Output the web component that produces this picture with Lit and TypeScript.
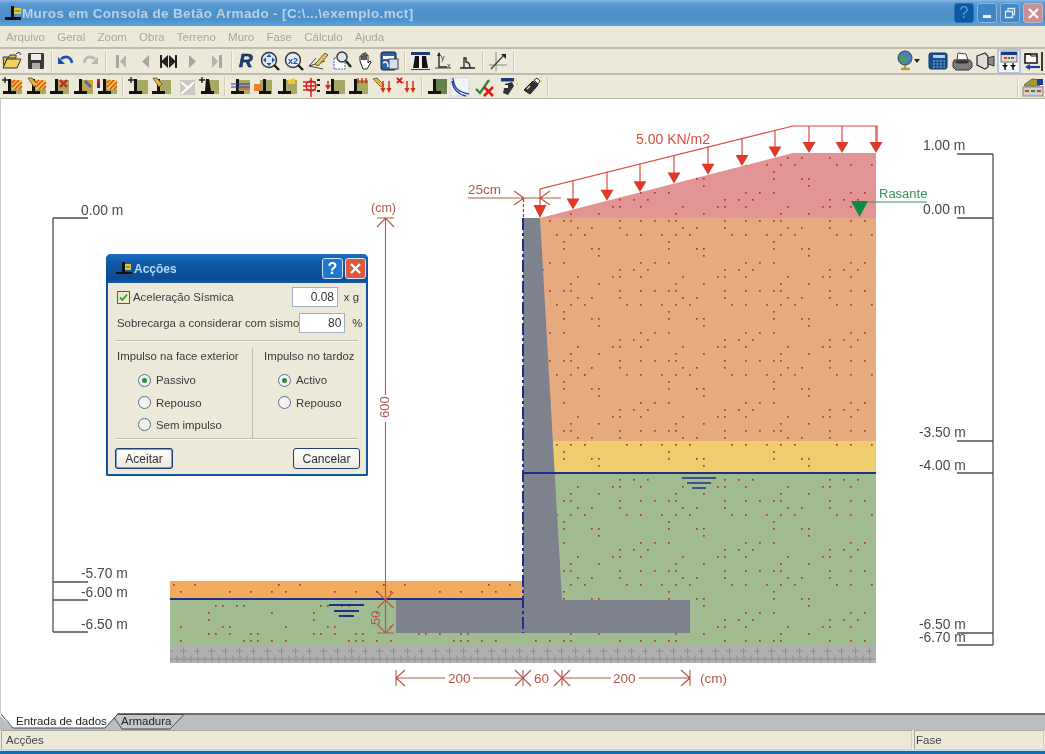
import { LitElement, html, css, svg } from "lit";
import { customElement } from "lit/decorators.js";

const FONT = '"Liberation Sans", Arial, sans-serif';

function wall(extra: any = null, hideWall = false) {
  return svg`
    ${hideWall ? svg`<rect x="6" y="4" width="15" height="15" fill="#c8c8c0"/><path d="M7 6l7 6-7 6M20 6l-6 6" stroke="#fff" stroke-width="2" fill="none"/>` : svg`
    <rect x="9" y="4" width="12" height="14" fill="#a9a765"/>
    <path d="M7 3h3v12h5v3H2v-3h5z" fill="#111"/>`}
    ${extra}`;
}
const plus = svg`<path d="M1 4h6M4 1v6" stroke="#222" stroke-width="1.4"/>`;
const hatch = svg`<rect x="11" y="4" width="10" height="9" fill="#f2c93a"/><path d="M11 7l3-3M11 11l7-7M14 13l7-7M18 13l3-3" stroke="#d8402c" stroke-width="1.4"/>`;
const pencil = svg`<path d="M3 2l4 0 5 6-3 3z" fill="#e6b93c" stroke="#533" stroke-width=".7"/>`;
const downs = (x: number) => svg`<path d="M${x} 5v9M${x + 6} 5v9" stroke="#d2301f" stroke-width="1.5"/><path d="M${x - 2.5} 12h5l-2.5 5zM${x + 3.5} 12h5l-2.5 5z" fill="#d2301f"/>`;

const ICONS: Record<string, any> = {
  open: svg`<path d="M2 7h6l1-2h6v3H6L3 17z" fill="#e8c44c" stroke="#333"/><path d="M6 9h14l-4 9H2z" fill="#f0d25c" stroke="#333"/><path d="M15 4l3-2 2 3" stroke="#333" fill="none"/>`,
  save: svg`<rect x="3" y="3" width="16" height="16" rx="1" fill="#3a3a3a"/><rect x="6" y="4" width="10" height="6" fill="#eee"/><rect x="7" y="13" width="8" height="6" fill="#aaa"/>`,
  undo: svg`<path d="M6 9c5-4 10-2 11 4" stroke="#1c4fb0" stroke-width="2.6" fill="none"/><path d="M3 7v7h7z" fill="#1c4fb0"/>`,
  redo: svg`<path d="M16 9c-5-4-10-2-11 4" stroke="#b8b8b0" stroke-width="2.6" fill="none"/><path d="M19 7v7h-7z" fill="#b8b8b0"/>`,
  first: svg`<rect x="6" y="5" width="3" height="13" fill="#a8a8a0"/><path d="M16 5v13l-6-6.5z" fill="#b4b4ac"/>`,
  prev: svg`<path d="M15 5v13l-7-6.5z" fill="#a8a8a0"/>`,
  both: svg`<path d="M11 5v13l-7-6.5zM12 5v13l7-6.5z" fill="#222"/><rect x="3" y="5" width="2" height="13" fill="#222"/><rect x="18" y="5" width="2" height="13" fill="#222"/>`,
  next: svg`<path d="M8 5v13l7-6.5z" fill="#a8a8a0"/>`,
  last: svg`<rect x="14" y="5" width="3" height="13" fill="#a8a8a0"/><path d="M7 5v13l6-6.5z" fill="#b4b4ac"/>`,
  zr: svg`<text x="3" y="17" font-family=${FONT} font-weight="700" font-style="italic" font-size="19" fill="#1c3f8f" stroke="#111" stroke-width=".5">R</text>`,
  zall: svg`<circle cx="10" cy="10" r="7.5" fill="#dfe8f2" stroke="#333" stroke-width="1.4"/><path d="M10 4l2.5 3h-5zM10 16l2.5-3h-5zM4 10l3-2.5v5zM16 10l-3-2.5v5z" fill="#1c4fb0"/><path d="M15 15l5 5" stroke="#222" stroke-width="2.4"/>`,
  z2: svg`<circle cx="10" cy="10" r="7.5" fill="#e6eef6" stroke="#333" stroke-width="1.4"/><text x="5" y="13.5" font-family=${FONT} font-size="9" font-weight="700" fill="#1c4fb0">x2</text><path d="M15 15l5 5" stroke="#222" stroke-width="2.4"/>`,
  pen: svg`<path d="M2 16l16-5M2 16l14 3M2 16l7-8" stroke="#444"/><path d="M8 14L18 3l3 2-10 11z" fill="#e8c44c" stroke="#433" stroke-width=".8"/>`,
  zdoc: svg`<rect x="3" y="8" width="11" height="11" fill="#fff" stroke="#3a6ac8" stroke-dasharray="2 1"/><circle cx="11" cy="7" r="5" fill="#dfe8f2" stroke="#333" stroke-width="1.4"/><path d="M15 11l5 6" stroke="#222" stroke-width="2.4"/>`,
  hand: svg`<path d="M6 11V6h2v4V4h2v6V3h2v7V5h2v8l2-2 1 1-4 7H9z" fill="#fff" stroke="#222" stroke-width="1"/>`,
  win: svg`<rect x="3" y="2" width="15" height="18" rx="2" fill="#2b63a8" stroke="#123"/><rect x="5" y="6" width="11" height="3" fill="#fff"/><rect x="11" y="9" width="9" height="10" fill="#dde" stroke="#345"/><path d="M5 13c3-2 5-1 5 4" stroke="#fff" stroke-width="1.5" fill="none"/>`,
  bin: svg`<rect x="2" y="2" width="19" height="18" fill="#20397c"/><rect x="2" y="5" width="19" height="14" fill="#eee"/><path d="M6 6h4v12H4zM13 6h4l2 12h-6z" fill="#111"/>`,
  axyx: svg`<path d="M6 3v14h8" stroke="#222" stroke-width="1.3" fill="none"/><path d="M6 2l-2 4h4z" fill="#222"/><text x="8" y="10" font-size="7" font-family=${FONT} fill="#333">y</text><text x="14" y="18" font-size="7" font-family=${FONT} fill="#333">x</text><path d="M2 18h16" stroke="#444"/>`,
  ang: svg`<path d="M4 18h15M8 18V8h2v4c3 0 4 2 4 6" stroke="#222" stroke-width="1.3" fill="none"/>`,
  graph: svg`<path d="M9 2v19M2 15h18" stroke="#888"/><path d="M4 19L17 5" stroke="#444" stroke-width="1.4"/><path d="M14 4h5v5z" fill="#222"/>`,
  globe: svg`<circle cx="10" cy="8" r="7" fill="#4d7fb8" stroke="#345"/><path d="M6 4c3 0 3 3 5 4s0 5-2 6c-1-3-4-3-4-6z" fill="#4e9a4e"/><path d="M6 19h9M10 15v4" stroke="#b8a030" stroke-width="2.4"/>`,
  calc: svg`<rect x="2" y="3" width="18" height="16" rx="2" fill="#17508f" stroke="#0c3568"/><rect x="6" y="5" width="12" height="3" fill="#b7d0e8"/><path d="M6 11h12M6 14h12M6 17h12" stroke="#9fc0e0" stroke-dasharray="2 1.5"/>`,
  print: svg`<path d="M7 3l8 1 2 6H6z" fill="#fff" stroke="#444"/><path d="M3 10h16l2 3v4l-3 3H5l-3-3v-4z" fill="#7e7e7e" stroke="#333"/><ellipse cx="11" cy="12" rx="7" ry="1.6" fill="#333"/>`,
  cam: svg`<path d="M3 6l8-3 3 3v11l-3 2-8-4z" fill="#ddd" stroke="#333" stroke-width="1.3"/><path d="M14 8l6-2v10l-6-2z" fill="#888" stroke="#333"/>`,
  panel: svg`<rect x="3" y="2" width="16" height="10" fill="#dcdcdc" stroke="#777"/><rect x="3" y="2" width="16" height="3" fill="#20397c"/><path d="M6 8h3M13 8h3" stroke="#d8402c" stroke-width="2"/><path d="M10 8h2" stroke="#2a8a3a" stroke-width="2"/><path d="M7 13v7M15 13v7" stroke="#111" stroke-width="1.4"/><path d="M4 15h6l-3 3zM12 15h6l-3 3z" fill="#111"/>`,
  exit: svg`<path d="M3 4h12v9H3z" fill="#fff" stroke="#111" stroke-width="1.5"/><path d="M3 4h5l1 2h6" fill="none" stroke="#111"/><path d="M20 2v19" stroke="#111" stroke-width="1.6"/><path d="M5 17h13" stroke="#1c3f9f" stroke-width="2.2"/><path d="M3 17l5-3v6z" fill="#1c3f9f"/>`,
  w1: wall(svg`${plus}${hatch}`),
  w2: wall(svg`${pencil}${hatch}`),
  w3: wall(svg`<path d="M12 4l7 7M19 4l-7 7" stroke="#d2201f" stroke-width="2.4"/>`),
  w4: wall(svg`<rect x="12" y="4" width="9" height="9" fill="#e0a030"/><path d="M13 5l6 6" stroke="#3070c0" stroke-width="3"/>`),
  w5: wall(svg`<rect x="1" y="3" width="3" height="4" fill="#d2201f"/><rect x="1" y="7" width="3" height="5" fill="#1c3f9f"/>${hatch}`),
  a1: wall(plus),
  a2: wall(pencil),
  a3: wall(null, true),
  a4: svg`<rect x="9" y="4" width="12" height="14" fill="#a9a765"/><path d="M8 3h3l2 12h3v3H3v-3h4z" fill="#111"/>${plus}`,
  b1: wall(svg`<path d="M2 8h19M2 11h19" stroke="#1c3f9f" stroke-width="1.2"/><path d="M9 13h12" stroke="#d2602f" stroke-width="1.4"/>`),
  b2: svg`<rect x="8" y="4" width="12" height="14" fill="#a9a765"/><rect x="2" y="8" width="8" height="7" fill="#e8822c"/><path d="M11 3h3v12h5v3H7v-3h4z" fill="#111"/>`,
  b3: wall(svg`<path d="M12 4l7-2v6h-7z" fill="#f0c83a"/>`),
  b4: svg`<path d="M11 2v19M3 6h13M3 10h13M3 14h13" stroke="#d2201f" stroke-width="1.5"/><circle cx="11" cy="10" r="5" fill="none" stroke="#d2201f" stroke-width="1.4"/><path d="M17 4h3M17 9h3M17 15h3" stroke="#222" stroke-width="2"/>`,
  b5: wall(svg`<path d="M4 5v6" stroke="#d2301f" stroke-width="1.5"/><path d="M1 9h6l-3 5z" fill="#d2301f"/>`),
  b6: wall(svg`<path d="M11 2v4M15 2v4M19 2v4" stroke="#d2301f" stroke-width="1.4"/><path d="M9 5h4l-2 3zM13 5h4l-2 3zM17 5h4l-2 3z" fill="#d2301f"/>`),
  c1: svg`<path d="M2 3l4-1 7 7-3 2z" fill="#e6b93c" stroke="#533" stroke-width=".7"/>${downs(12)}`,
  c2: svg`<path d="M2 2l5 5M7 2L2 7" stroke="#d2201f" stroke-width="1.8"/><path d="M6 6l3 1" stroke="#d2201f"/>${downs(12)}`,
  d1: svg`<rect x="9" y="3" width="12" height="15" fill="#6f7a4a"/><path d="M7 3h3v12h5v3H2v-3h5z" fill="#111"/><path d="M12 3l8 15" stroke="#3fa060" stroke-width="1.2"/>`,
  d2: svg`<path d="M2 2h18v18H2z" fill="#f4f4f8" stroke="#c0c8e0" stroke-dasharray="1 1"/><path d="M4 2c1 10 5 14 16 16M3 5c1 8 5 13 14 15" stroke="#1c3f9f" stroke-width="1.3" fill="none"/>`,
  d3: svg`<path d="M3 13l4 4 9-13" stroke="#2a8a3a" stroke-width="2.4" fill="none"/><path d="M11 11l9 9M20 11l-9 9" stroke="#d2201f" stroke-width="2.6"/>`,
  d4: svg`<rect x="4" y="2" width="13" height="3.5" fill="#20397c"/><path d="M8 8l7-2 2 4-6 9-5-2z" fill="#333"/><path d="M18 4h2M19 8h2" stroke="#e6c040"/><rect x="6" y="9" width="5" height="3" fill="#eee"/>`,
  d5: svg`<path d="M3 14l9-9 5 4-8 9z" fill="#333" stroke="#111"/><path d="M13 4l3-2 3 3-2 3z" fill="#eee" stroke="#333"/><path d="M19 2l2-1M20 5h2" stroke="#e6c040"/><path d="M6 13l3-3" stroke="#ddd" stroke-width="1.5"/>`,
  e1: svg`<path d="M2 9l8-6 8 1 3 2-4 4H3z" fill="#a89a28" stroke="#665"/><rect x="15" y="3" width="6" height="6" fill="#1c3f9f"/><rect x="1" y="11" width="20" height="9" fill="#cfcfcf" stroke="#888"/><path d="M3 15h4M15 15h4" stroke="#d2402c" stroke-width="2"/><path d="M9 15h4" stroke="#2a8a3a" stroke-width="2"/>`,
};

const ROW1 = ["open", "save", "|6", "undo", "redo", "|5", "first", "prev", "both", "next", "last", "|5", "zr", "zall", "z2", "pen", "zdoc", "hand", "win", "|4", "bin", "axyx", "ang", "|8", "graph", "|7"];
const ROW1R = ["globe", "~", "calc", "print", "cam", "*panel", "exit"];
const ROW2 = ["w1", "w2", "w3", "w4", "w5", "|4", "a1", "a2", "a3", "a4", "|4", "b1", "b2", "b3", "b4", "b5", "b6", "c1", "c2", "|4", "d1", "d2", "d3", "d4", "d5", "|5"];
const ROW2R = ["|2", "e1"];

function renderTools(items: string[]) {
  return items.map((n) => {
    if (n[0] === "|") return html`<span class="sep"></span>`;
    if (n === "~") return html`<span class="drop"></span>`;
    const active = n[0] === "*";
    const name = active ? n.slice(1) : n;
    return html`<span class="tool ${active ? "active" : ""}"><svg viewBox="0 0 22 22" width="22" height="22">${ICONS[name]}</svg></span>`;
  });
}

function dots(w: number, h: number, seed: number, n: number) {
  let s = seed;
  const r = () => ((s = (s * 9301 + 49297) % 233280) / 233280);
  const out: any[] = [];
  for (let i = 0; i < n; i++) {
    const x = Math.floor(r() * (w / 7)) * 7 + 3;
    const y = Math.floor(r() * (h / 7)) * 7 + 3;
    out.push(svg`<rect x=${x} y=${y} width="1.7" height="1.7" fill="#a5382f"/>`);
  }
  return out;
}

function loads() {
  const xs = [573, 607, 640, 674, 708, 742, 775, 809, 842, 876];
  return xs.map((x) => {
    const top = x <= 793 ? 188 - ((x - 540) * 62) / 253 : 126;
    const tip = x <= 793 ? 218 - ((x - 540) * 65) / 253 : 153;
    return svg`<path d=${`M${x} ${top}V${tip - 8}`} stroke="#dd4b3c" stroke-width="1.2"/>
      <path d=${`M${x - 6.5} ${tip - 11}h13l-6.5 11z`} fill="#de3a2c"/>`;
  });
}

const star = (x: number, y: number) =>
  svg`<path d=${`M${x - 8} ${y - 8}L${x + 8} ${y + 8}M${x + 8} ${y - 8}L${x - 8} ${y + 8}`} class="dim"/>`;

@customElement("app-root")
export class AppRoot extends LitElement {
  static styles = css`
    :host { display: flex; flex-direction: column; width: 1045px; height: 754px; overflow: hidden; background: #ece9d8; font-family: "Liberation Sans", Arial, sans-serif; filter: blur(0.35px); }
    .title { height: 26px; flex: none; display: flex; align-items: center; background: linear-gradient(#8ab8e2 0, #5c9ad2 3px, #4f90c8 50%, #4e90c8 75%, #5aa6dd 100%); padding-left: 4px; }
    .app-icon { width: 18px; height: 20px; flex: none; }
    .title-text { margin-left: 0; color: #b6d3ec; font-size: 13.5px; font-weight: 700; letter-spacing: .35px; flex: 1; white-space: nowrap; }
    .wbtn { width: 20px; height: 20px; border-radius: 3px; margin-right: 3px; display: flex; align-items: center; justify-content: center; border: 1px solid #8fb6da; background: #3f86c4; color: #d6e6f4; box-sizing: border-box; font-size: 16px; }
    .wbtn.help { background: #0b59a6; color: #5f9bd0; border-color: #2d6fb0; }
    .wbtn.close { background: #c88f98; color: #fff; border-color: #c9b4bc; margin-right: 2px; }
    .menu { height: 21px; flex: none; display: flex; align-items: center; box-sizing: border-box; padding: 0 0 0 6px; gap: 12.2px; font-size: 11.5px; color: #a8a696; }
    .bar { flex: none; display: flex; align-items: center; border-top: 2px solid #bdbbb0; box-sizing: border-box; }
    .bar.one { height: 26px; }
    .bar.two { height: 25px; }
    .grow { flex: 1; }
    .tool { width: 23.75px; height: 22px; display: flex; align-items: center; justify-content: center; flex: none; box-sizing: border-box; }
    .tool.active { background: #f6f6f4; outline: 2px solid #b4c6e6; outline-offset: -1px; height: 23px; width: 22px; margin: 0 1px; }
    .sep { width: 1px; height: 20px; background: #cfccba; margin: 0 3px 0 3px; flex: none; box-shadow: 1px 0 #f8f6ea; }
    .gap6 { width: 3px; flex: none; }
    .drop { width: 0; height: 0; border: 3.5px solid transparent; border-top: 4px solid #222; border-bottom: 0; margin: 0 6px 0 -4px; flex: none; }
    .canvas { position: relative; flex: 1; min-height: 0; background: #fff; border-top: 1px solid #b5b3a8; border-left: 1px solid #c8c8c8; box-sizing: border-box; }
    .canvas > svg { position: absolute; left: -1px; top: -1px; display: block; }
    .t { font-family: "Liberation Sans", Arial, sans-serif; font-size: 13.8px; fill: #45484c; }
    .r { font-family: "Liberation Sans", Arial, sans-serif; font-size: 13.5px; fill: #b5564a; }
    .dim { stroke: #b5564a; stroke-width: 1.1; fill: none; }
    .lev { stroke: #4c5054; stroke-width: 1.3; fill: none; }
    .tabtxt { font-family: "Liberation Sans", Arial, sans-serif; font-size: 11.5px; fill: #222; }
    .tabs { height: 17px; flex: none; display: block; width: 1045px; }
    .status { height: 20px; flex: none; display: flex; gap: 2px; padding: 0 1px; box-sizing: border-box; font-size: 11.5px; color: #444; }
    .cell { border: 1px solid #d4d0c0; border-top-color: #aaa89a; border-left-color: #aaa89a; display: flex; align-items: center; padding-left: 4px; box-sizing: border-box; }
    .cell.main { width: 911px; }
    .cell.aux { flex: 1; padding-left: 1px; }
    .bottom { flex: none; height: 4px; background: #0f6db3; border-top: 1px solid #c8dcee; box-sizing: border-box; }

    .dlg { position: absolute; left: 105px; top: 155px; width: 262px; height: 222px; box-sizing: border-box; background: #ece9d8; border: 2px solid #0f55a0; border-top: 0; border-radius: 5px 5px 2px 2px; display: flex; flex-direction: column; font-size: 11.4px; color: #3a3a3a; }
    .dlg-title { height: 29px; flex: none; margin: 0 -2px; border-radius: 5px 5px 0 0; background: linear-gradient(#1b6cc0 0, #0e5aa8 30%, #0b4c94 85%, #1158a8); display: flex; align-items: center; padding: 0 2px 0 9px; color: #b8d8f4; font-weight: 700; font-size: 12px; }
    .dlg-title .name { flex: 1; margin-left: 1px; }
    .dbtn { width: 21px; height: 21px; box-sizing: border-box; border: 1px solid #d8e8f8; border-radius: 3px; display: flex; align-items: center; justify-content: center; margin-left: 2px; background: #1f78cc; color: #fff; font-size: 16px; }
    .dbtn.x { background: #e0583c; }
    .dlg-body { flex: 1; display: flex; flex-direction: column; padding: 4px 6px 0 6px; }
    .line { display: flex; align-items: center; height: 20px; }
    .line + .line { margin-top: 6px; }
    .check { width: 13px; height: 13px; box-sizing: border-box; border: 1px solid #3b5f88; background: #f4e8c4; margin: 0 3px 0 3px; display: flex; flex: none; }
    .lab1 { flex: 1; }
    .lab2 { flex: 1; padding-left: 3px; white-space: nowrap; }
    .field { width: 46px; height: 20px; box-sizing: border-box; border: 1px solid #a0b0c4; background: #fff; text-align: right; padding: 2px 3px 0 0; font-size: 12px; color: #333; flex: none; }
    .unit { width: 22px; text-align: right; flex: none; padding-right: 1px; box-sizing: border-box; }
    .unit.pct { padding-right: 5px; }
    .rule { height: 1px; background: #bdbab0; border-bottom: 1px solid #fbfaf2; margin: 7px 2px 0 2px; flex: none; }
    .cols { display: grid; grid-template-columns: 139px 1fr; height: 90px; flex: none; margin-top: 6px; }
    .col { padding: 2px 0 0 3px; display: flex; flex-direction: column; }
    .col.l { border-right: 1px solid #bdbab0; }
    .col.rgt { padding-left: 11px; }
    .head { height: 15px; white-space: nowrap; }
    .opt { display: flex; align-items: center; height: 22.4px; margin-left: 21px; gap: 5px; }
    .opts { margin-top: 4px; }
    .col.rgt .opt { margin-left: 14px; }
    .radio { width: 13px; height: 13px; box-sizing: border-box; border: 1px solid #4f7196; border-radius: 50%; background: #f4f2ea; display: flex; align-items: center; justify-content: center; flex: none; }
    .radio.on::after { content: ""; width: 5px; height: 5px; border-radius: 50%; background: #2e8a4a; }
    .btns { display: flex; justify-content: space-between; padding: 8px 0 0 1px; }
    .btn { height: 21px; box-sizing: border-box; border: 1px solid #233f70; border-radius: 3px; background: linear-gradient(#fff, #ece9de); display: flex; align-items: center; justify-content: center; font-size: 12px; color: #333; }
    .btn.ok { width: 58px; border: 2px solid #7e9ed8; outline: 1px solid #233f70; outline-offset: -1px; }
    .btn.no { width: 67px; }
  `;

  private bracket() {
    const left = [[218, "0.00 m", 81, 215], [582, "-5.70 m", 81, 578], [600, "-6.00 m", 81, 597], [632, "-6.50 m", 81, 629]] as const;
    const right = [[154, "1.00 m", 923, 150], [218, "0.00 m", 923, 214], [441, "-3.50 m", 919, 437], [473, "-4.00 m", 919, 470], [633, "-6.50 m", 919, 629], [645, "-6.70 m", 919, 642]] as const;
    return svg`
      <path class="lev" d="M53 218V632"/>
      ${left.map(([y, t, x, b]) => svg`<path class="lev" d=${`M53 ${y}H88`}/><text class="t" x=${x} y=${b}>${t}</text>`)}
      <path class="lev" d="M993 154V645"/>
      ${right.map(([y, t, x, b]) => svg`<path class="lev" d=${`M957 ${y}H993`}/><text class="t" x=${x} y=${b}>${t}</text>`)}`;
  }

  private drawing() {
    return html`<svg width="1045" height="615" viewBox="0 98 1045 615">
      <defs>
        <pattern id="pd" patternUnits="userSpaceOnUse" width="105" height="70">${dots(105, 70, 17, 30)}</pattern>
        <pattern id="pd2" patternUnits="userSpaceOnUse" width="105" height="21" x="170" y="581">${dots(105, 21, 5, 14)}</pattern>
        <pattern id="pd3" patternUnits="userSpaceOnUse" width="105" height="42" x="170" y="602">${dots(105, 42, 23, 20)}</pattern>
        <pattern id="pl" patternUnits="userSpaceOnUse" width="14" height="18" x="170" y="645">
          <path d="M10 6h7M13.5 2.5v7M3 6h0M-4 6h7M-.5 2.5v7" stroke="#8e8e92" stroke-width="1"/>
          <path d="M-3.5 14h7M0 10.5v7M10.5 14h7M14 10.5v7M3.5 14h7M7 10.5v7" stroke="#8e8e92" stroke-width="1"/>
        </pattern>
      </defs>
      <!-- soil -->
      <path d="M540 218L793 153H876V218z" fill="#e39595"/><path d="M540 218L793 153H876V218z" fill="url(#pd)"/>
      <rect x="540" y="218" width="336" height="223" fill="#e5aa7e"/><rect x="540" y="218" width="336" height="223" fill="url(#pd)"/>
      <rect x="550" y="441" width="326" height="32" fill="#efcd6e"/><rect x="550" y="441" width="326" height="32" fill="url(#pd)"/>
      <rect x="523" y="473" width="353" height="172" fill="#a0bc90"/><rect x="523" y="473" width="353" height="172" fill="url(#pd)"/>
      <rect x="170" y="581" width="353" height="18" fill="#f2aa5c"/><rect x="170" y="581" width="353" height="18" fill="url(#pd2)"/>
      <rect x="170" y="600" width="353" height="45" fill="#a0bc90"/><rect x="170" y="600" width="353" height="45" fill="url(#pd3)"/>
      <rect x="170" y="645" width="706" height="18" fill="#b0b0b2"/><rect x="170" y="645" width="706" height="18" fill="url(#pl)"/>
      <!-- wall -->
      <path d="M523 218H540L562 600H690V633H396V600H523z" fill="#7d828c"/>
      <path d="M523 473H876" stroke="#1d2f8c" stroke-width="1.8"/>
      <path d="M170 599H523" stroke="#1d2f8c" stroke-width="2"/>
      <path d="M523 218V633" stroke="#1d2f8c" stroke-width="2" stroke-dasharray="12 3 3 3"/>
      <path d="M682 478h34M687 483h24M692 488h14" stroke="#1d2f8c" stroke-width="1.6"/>
      <path d="M329 605h35M334 611h25M339 616h15" stroke="#1d2f8c" stroke-width="1.8"/>
      <!-- load -->
      <path d="M540 206V189L793 126H877V150" stroke="#dd4b3c" stroke-width="1.2" fill="none"/>
      <path d="M533.5 205h13l-6.5 13z" fill="#de3a2c"/>
      ${loads()}
      <text x="636" y="144" class="r" fill="#d9503f" style="fill:#d9503f;font-size:14px">5.00 KN/m2</text>
      <text x="468" y="194" class="r" style="font-size:13.5px">25cm</text>
      <path class="dim" d="M468 198H561M514 191L524 198L514 205M550 191L540 198L550 205"/>
      <path d="M523.5 199V218" stroke="#a5382f" stroke-width="1.2" stroke-dasharray="3 2"/>
      <!-- rasante -->
      <text x="879" y="198" style="font-family:'Liberation Sans',Arial,sans-serif;font-size:13px;fill:#3a9158">Rasante</text>
      <path d="M859 202H927" stroke="#3a9158" stroke-width="1.2"/>
      <path d="M851 201H868L859.5 217z" fill="#0e8a44"/>
      <!-- vertical dimension -->
      <text x="371" y="212" class="r" style="font-size:12.5px">(cm)</text>
      <path class="dim" d="M385.5 218V395M385.5 422V633M377 227L385.5 218L394 227M377 218H394M377 624L385.5 633L394 624M377 633H394"/>
      ${star(385.5, 600)}
      <text class="r" transform="translate(389 418) rotate(-90)" style="font-size:13px">600</text>
      <text class="r" transform="translate(380 625) rotate(-90)" style="font-size:13px">50</text>
      <!-- horizontal dimension -->
      <path class="dim" d="M396 670V686M396 678L405 670M396 678L405 686M396 678H445M473 678H523M523 670V686M562 670V686M562 678H611M639 678H690M690 670V686M690 678L681 670M690 678L681 686"/>
      ${star(523, 678)}${star(562, 678)}
      <text class="r" x="448" y="683" style="font-size:13.5px">200</text>
      <text class="r" x="534" y="683" style="font-size:13.5px">60</text>
      <text class="r" x="613" y="683" style="font-size:13.5px">200</text>
      <text class="r" x="700" y="683" style="font-size:13.5px">(cm)</text>
      ${this.bracket()}
    </svg>`;
  }

  private dialog() {
    return html`<div class="dlg">
      <div class="dlg-title">
        <svg class="app-icon" viewBox="0 0 18 20"><path d="M7 3h3v10h7v2H1v-2h6z" fill="#111"/><rect x="10" y="5" width="6" height="6" fill="#e8c83a"/><path d="M11 8h4" stroke="#2a7a3a"/></svg>
        <span class="name">Acções</span>
        <span class="dbtn">?</span><span class="dbtn x">
          <svg width="13" height="13" viewBox="0 0 13 13"><path d="M2 2l9 9M11 2l-9 9" stroke="#fff" stroke-width="2.4"/></svg></span>
      </div>
      <div class="dlg-body">
        <div class="line">
          <span class="check"><svg width="11" height="11" viewBox="0 0 11 11"><path d="M2 5.5l2.5 2.5L9 2.5" stroke="#2a9a4a" stroke-width="1.8" fill="none"/></svg></span>
          <span class="lab1">Aceleração Sísmica</span>
          <span class="field">0.08</span><span class="unit">x g</span>
        </div>
        <div class="line">
          <span class="lab2">Sobrecarga a considerar com sismo</span>
          <span class="field">80</span><span class="unit pct">%</span>
        </div>
        <div class="rule"></div>
        <div class="cols">
          <div class="col l">
            <span class="head">Impulso na face exterior</span>
            <div class="opts">
              <div class="opt"><span class="radio on"></span>Passivo</div>
              <div class="opt"><span class="radio"></span>Repouso</div>
              <div class="opt"><span class="radio"></span>Sem impulso</div>
            </div>
          </div>
          <div class="col rgt">
            <span class="head">Impulso no tardoz</span>
            <div class="opts">
              <div class="opt"><span class="radio on"></span>Activo</div>
              <div class="opt"><span class="radio"></span>Repouso</div>
            </div>
          </div>
        </div>
        <div class="rule" style="margin-top:0"></div>
        <div class="btns"><span class="btn ok">Aceitar</span><span class="btn no">Cancelar</span></div>
      </div>
    </div>`;
  }

  render() {
    return html`
      <div class="title">
        <svg class="app-icon" viewBox="0 0 18 20"><path d="M7 3h3v11h7v3H1v-3h6z" fill="#111"/><rect x="10" y="5" width="7" height="6" fill="#e8c83a"/><path d="M11 8h5" stroke="#2a7a3a"/></svg>
        <span class="title-text">Muros em Consola de Betão Armado - [C:\\...\\exemplo.mct]</span>
        <span class="wbtn help">?</span>
        <span class="wbtn"><svg width="12" height="12" viewBox="0 0 12 12"><rect x="2" y="8" width="8" height="3" fill="#e8f0f8"/></svg></span>
        <span class="wbtn"><svg width="12" height="12" viewBox="0 0 12 12"><path d="M1.5 4.5h7v6h-7zM4 4V1.5h6.5v6H9" fill="none" stroke="#e0ecf6" stroke-width="1.3"/></svg></span>
        <span class="wbtn close"><svg width="13" height="13" viewBox="0 0 13 13"><path d="M2 2l9 9M11 2l-9 9" stroke="#fff" stroke-width="2.2"/></svg></span>
      </div>
      <div class="menu"><span>Arquivo</span><span>Geral</span><span>Zoom</span><span>Obra</span><span>Terreno</span><span>Muro</span><span>Fase</span><span>Cálculo</span><span>Ajuda</span></div>
      <div class="bar one">${renderTools(ROW1)}<span class="grow"></span>${renderTools(ROW1R)}</div>
      <div class="bar two">${renderTools(ROW2)}<span class="grow"></span>${renderTools(ROW2R)}</div>
      <div class="canvas">${this.drawing()}${this.dialog()}</div>
      <svg class="tabs" viewBox="0 0 1045 17">
        <rect width="1045" height="17" fill="#bcbdc1"/>
        <path d="M0 1H1045" stroke="#55585c" stroke-width="1.4"/>
        <path d="M112 1.5L122 16H170L184 1.5z" fill="#c6c7ca" stroke="#45484c"/>
        <path d="M0 0H118L105 15H13L0 3z" fill="#fff"/>
        <path d="M1 1L13 15H105L118 1" stroke="#45484c" fill="none"/>
        <text class="tabtxt" x="16" y="11.5">Entrada de dados</text>
        <text class="tabtxt" x="121" y="11.5">Armadura</text>
      </svg>
      <div class="status"><span class="cell main">Acções</span><span class="cell aux">Fase</span></div>
      <div class="bottom"></div>
    `;
  }
}
